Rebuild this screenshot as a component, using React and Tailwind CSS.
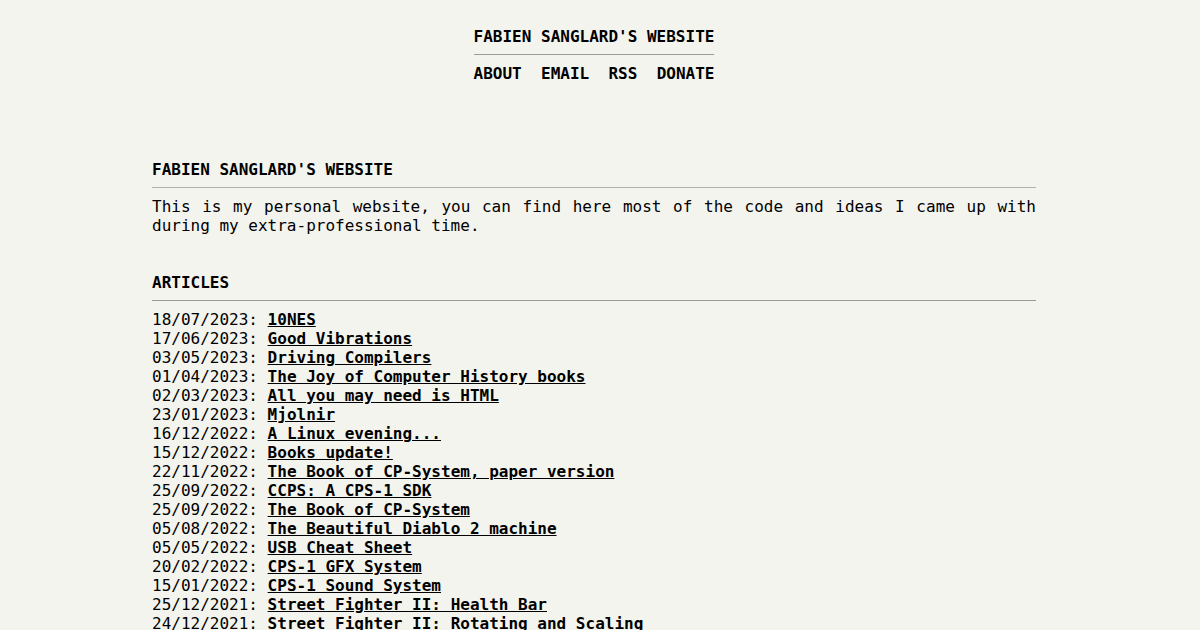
import React from "react";

const articles = [
  ["18/07/2023", "10NES"],
  ["17/06/2023", "Good Vibrations"],
  ["03/05/2023", "Driving Compilers"],
  ["01/04/2023", "The Joy of Computer History books"],
  ["02/03/2023", "All you may need is HTML"],
  ["23/01/2023", "Mjolnir"],
  ["16/12/2022", "A Linux evening..."],
  ["15/12/2022", "Books update!"],
  ["22/11/2022", "The Book of CP-System, paper version"],
  ["25/09/2022", "CCPS: A CPS-1 SDK"],
  ["25/09/2022", "The Book of CP-System"],
  ["05/08/2022", "The Beautiful Diablo 2 machine"],
  ["05/05/2022", "USB Cheat Sheet"],
  ["20/02/2022", "CPS-1 GFX System"],
  ["15/01/2022", "CPS-1 Sound System"],
  ["25/12/2021", "Street Fighter II: Health Bar"],
  ["24/12/2021", "Street Fighter II: Rotating and Scaling"],
];

export default function App() {
  return (
    <div className="min-h-screen bg-[#f4f4ef] text-black text-[16px] leading-[19px] font-['DejaVu_Sans_Mono',monospace]">
      <div className="w-[884px] ml-[152px] pt-[27px]">
        {/* top header */}
        <div className="text-center">
          <div className="inline-block font-bold">
            <div>FABIEN SANGLARD'S WEBSITE</div>
            <div className="mt-[8px] mb-[9px] border-t border-[#9a9a9a]" />
            <div className="whitespace-pre">
              <a href="#">ABOUT</a>{"  "}
              <a href="#">EMAIL</a>{"  "}
              <a href="#">RSS</a>{"  "}
              <a href="#">DONATE</a>
            </div>
          </div>
        </div>

        {/* intro */}
        <div className="mt-[77px]">
          <div className="font-bold">FABIEN SANGLARD'S WEBSITE</div>
          <div className="mt-[8px] mb-[9px] border-t border-[#b0b0b0]" />
          <p className="text-justify">
            This is my personal website, you can find here most of the code and ideas I came up with
            during my extra-professional time.
          </p>
        </div>

        {/* articles */}
        <div className="mt-[38px]">
          <div className="font-bold">ARTICLES</div>
          <div className="mt-[8px] mb-[9px] border-t border-[#9a9a9a]" />
          <div>
            {articles.map(([date, title], i) => (
              <div key={i} className="whitespace-pre">
                {date}:{" "}
                <a href="#" className="font-bold underline">
                  {title}
                </a>
              </div>
            ))}
          </div>
        </div>
      </div>
    </div>
  );
}
